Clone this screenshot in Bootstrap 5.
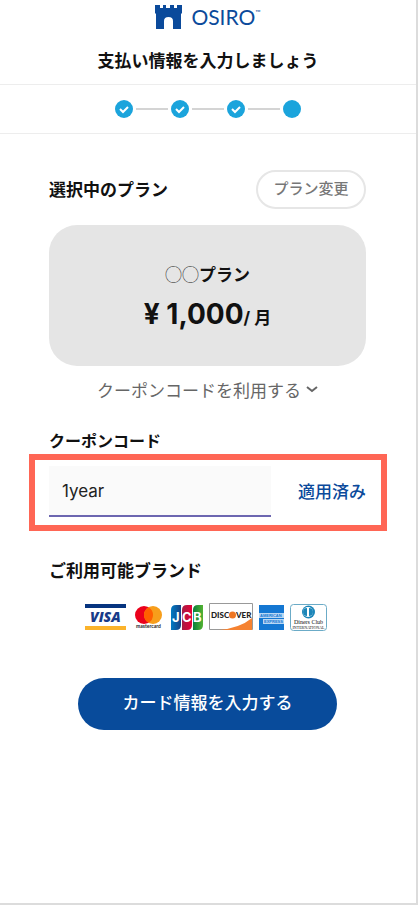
<!DOCTYPE html>
<html lang="ja">
<head>
<meta charset="utf-8">
<meta name="viewport" content="width=device-width, initial-scale=1">
<title>支払い情報の入力 | OSIRO</title>
<link href="https://cdn.jsdelivr.net/npm/bootstrap@5.3.0/dist/css/bootstrap.min.css" rel="stylesheet">
<style>
body { font-family: Inter, "Noto Sans CJK JP", sans-serif; font-size: 17px; line-height: 24px; color: #111; }
.screen { border-right: 2px solid #dcdcdc; border-bottom: 2px solid #dcdcdc; margin-bottom: 1px; }
.page-head { border-bottom: 1px solid #ededed; padding: 4px 0 11px; }
.brand { color: #0b4a9b; font: 400 21px/26px Lato, sans-serif; gap: 9px; margin-bottom: 19px; }
.brand small { font-size: 7px; line-height: 16px; }
.t17 { font-size: 17px; line-height: 24px; font-weight: 700; }
.t16 { font-size: 16px; line-height: 24px; font-weight: 700; }
.steps { height: 49px; gap: 3px; border-bottom: 1px solid #ededed; }
.step-dot { width: 18px; height: 18px; border-radius: 50%; background: #1ba4dc; }
.step-line { width: 32px; height: 2px; background: #d4d4d4; }
.content { padding: 36px 50px 0 49px; }
.btn-change { width: 110px; height: 39px; padding: 0; border: 2px solid #e6e6e6; font-size: 15px; font-weight: 500; color: #777; }
.plan { background: #e5e5e5; border-radius: 28px; height: 141px; margin-top: 16px; padding-top: 37px; }
.plan-mark { font-family: "Noto Sans CJK JP", sans-serif; font-weight: 300; }
.price { font-size: 28px; line-height: 34px; font-weight: 700; margin-top: 10px; }
.toggle { color: #666; font-size: 17px; line-height: 24px; margin: 13px 0 26px; }
.highlight { border: 6px solid #ff6655; margin: 1px -21px 0 -20px; padding: 6px 15px 8px 14px; }
.code-input, .code-input:focus { background: #fafafa; border: 0; border-bottom: 2px solid #6c66b0; border-radius: 0; box-shadow: none; height: 51px; padding: 0 13px; font-size: 17px; color: #222; width: 70%; }
.applied { color: #0b4a9b; font-weight: 500; }
.cards { gap: 6px; margin: 20px 0 47px; padding-right: 4px; }
.wide-gap { margin-right: 3px; }
.btn-main, .btn-main:hover { background: #084b9b; color: #fff; height: 52px; width: 81.5%; font-size: 17px; font-weight: 500; }
.tail { height: 173px; }
</style>
</head>
<body>
<div class="screen">
  <header class="page-head text-center">
    <div class="brand d-flex justify-content-center align-items-center">
      <svg width="27" height="24" viewBox="0 0 27 24" fill="currentColor" aria-hidden="true"><path d="M0 0h5v3h3V0h3v3h4V0h4v3h3V0h5v8l-1 1v15h-8v-8q0-4-4.500-4T9 16v8H1V9L0 8z"/></svg>
      <span class="d-flex">OSIRO<small>™</small></span>
    </div>
    <h1 class="t17 m-0">支払い情報を入力しましょう</h1>
  </header>
  <div class="steps d-flex justify-content-center align-items-center" role="img" aria-label="ステップ 4 / 4">
    <span class="step-dot d-flex"><svg width="18" height="18" fill="none" stroke="#fff" stroke-width="2"><path d="m5 9 3 3 5-5"/></svg></span>
    <span class="step-line"></span>
    <span class="step-dot d-flex"><svg width="18" height="18" fill="none" stroke="#fff" stroke-width="2"><path d="m5 9 3 3 5-5"/></svg></span>
    <span class="step-line"></span>
    <span class="step-dot d-flex"><svg width="18" height="18" fill="none" stroke="#fff" stroke-width="2"><path d="m5 9 3 3 5-5"/></svg></span>
    <span class="step-line"></span>
    <span class="step-dot"></span>
  </div>
  <main class="content">
    <div class="d-flex justify-content-between align-items-center">
      <h2 class="t17 m-0">選択中のプラン</h2>
      <button type="button" class="btn btn-change rounded-pill">プラン変更</button>
    </div>
    <section class="plan text-center">
      <div class="t17"><span class="plan-mark">◯◯</span>プラン</div>
      <div class="price">¥ 1,000<span class="t17">/ 月</span></div>
    </section>
    <div class="text-center"><button type="button" class="toggle btn p-0 border-0">クーポンコードを利用する <svg width="12" height="14" viewBox="0 0 12 14" fill="none" stroke="currentColor" stroke-width="2" aria-hidden="true"><path d="m1 2 5 4 5-4"/></svg></button></div>
    <label class="t16 d-block" for="code">クーポンコード</label>
    <div class="highlight d-flex justify-content-between align-items-center">
      <input id="code" type="text" class="code-input form-control" value="1year">
      <span class="applied text-nowrap">適用済み</span>
    </div>
    <h2 class="t17 mb-0 mt-4 pt-1">ご利用可能ブランド</h2>
    <div class="cards d-flex justify-content-center align-items-center">
      <svg class="wide-gap" width="41" height="26" role="img" aria-label="VISA"><path fill="#06347f" d="M0 0h41v4H0z"/><path fill="#fbb32b" d="M0 22h41v4H0z"/><text x="5" y="18" font-family="Open Sans" font-size="14" font-weight="800" font-style="italic" fill="#173a88">VISA</text></svg>
      <svg class="wide-gap" width="27" height="25" role="img" aria-label="mastercard"><circle cx="9" cy="10" r="9" fill="#eb001b"/><circle cx="18" cy="10" r="9" fill="#f79e1b"/><path fill="#ff5f00" d="M13.500 2.200a9 9 0 0 1 0 15.600a9 9 0 0 1 0-15.600"/><text x="1" y="23" font-family="Lato" font-size="5" font-weight="700" fill="#222">mastercard</text></svg>
      <svg width="32" height="25" role="img" aria-label="JCB"><defs><linearGradient id="jb"><stop stop-color="#007bc4"/><stop offset="1" stop-color="#164285"/></linearGradient><linearGradient id="jr"><stop stop-color="#a51e43"/><stop offset="1" stop-color="#e60039"/></linearGradient><linearGradient id="jg"><stop stop-color="#087f3c"/><stop offset="1" stop-color="#55b332"/></linearGradient></defs><path fill="url(#jb)" d="M0 5q0-5 5-5h5v20q0 5-5 5H0z"/><path fill="url(#jr)" d="M11 5q0-5 5-5h5v20q0 5-5 5h-5z"/><path fill="url(#jg)" d="M22 5q0-5 5-5h5v20q0 5-5 5h-5z"/><text x="1" y="17" font-family="Inter" font-size="13" font-weight="700" fill="#fff"><tspan x="1">J</tspan><tspan x="11">C</tspan><tspan x="22">B</tspan></text></svg>
      <svg width="44" height="28" role="img" aria-label="DISCOVER"><path fill="#fff" stroke="#999" d="M.5.5h43v26H.5z"/><path fill="#f58231" d="M10 27Q31 25 43 15v12z"/><text x="2" y="15" font-family="Lato" font-size="8" font-weight="900" fill="#222">DISC</text><circle cx="23.500" cy="12" r="3.500" fill="#ee7623"/><text x="27" y="15" font-family="Lato" font-size="8" font-weight="900" fill="#222">VER</text></svg>
      <svg width="25" height="25" role="img" aria-label="AMERICAN EXPRESS"><path fill="#1477d2" d="M0 0h25v25H0z"/><g font-family="Liberation Sans" font-size="4" font-weight="700" fill="#1477d2"><path fill="#b9d8f4" d="M0 8h25v5H0zM4 14h21v5H4z"/><text x="1" y="12">AMERICAN</text><text x="5" y="18">EXPRESS</text></g></svg>
      <svg width="37" height="27" role="img" aria-label="Diners Club INTERNATIONAL"><rect x=".5" y=".5" width="36" height="26" rx="3" fill="#fff" stroke="#6babc7"/><circle cx="18.500" cy="8" r="6.500" fill="#1c86b9"/><circle cx="18" cy="8" r="5" fill="#fff"/><path fill="#1c86b9" d="M17 4a4 4 0 0 0 0 8zM19 4a4 4 0 0 1 0 8z"/><g font-family="Liberation Serif" fill="#111" text-anchor="middle"><text x="18.500" y="20" font-size="6">Diners Club</text><text x="18.500" y="25" font-size="4">INTERNATIONAL</text></g></svg>
    </div>
    <div class="text-center"><button type="button" class="btn btn-main rounded-pill">カード情報を入力する</button></div>
    <div class="tail"></div>
  </main>
</div>
<script src="https://cdn.jsdelivr.net/npm/bootstrap@5.3.0/dist/js/bootstrap.bundle.min.js"></script>
</body>
</html>
